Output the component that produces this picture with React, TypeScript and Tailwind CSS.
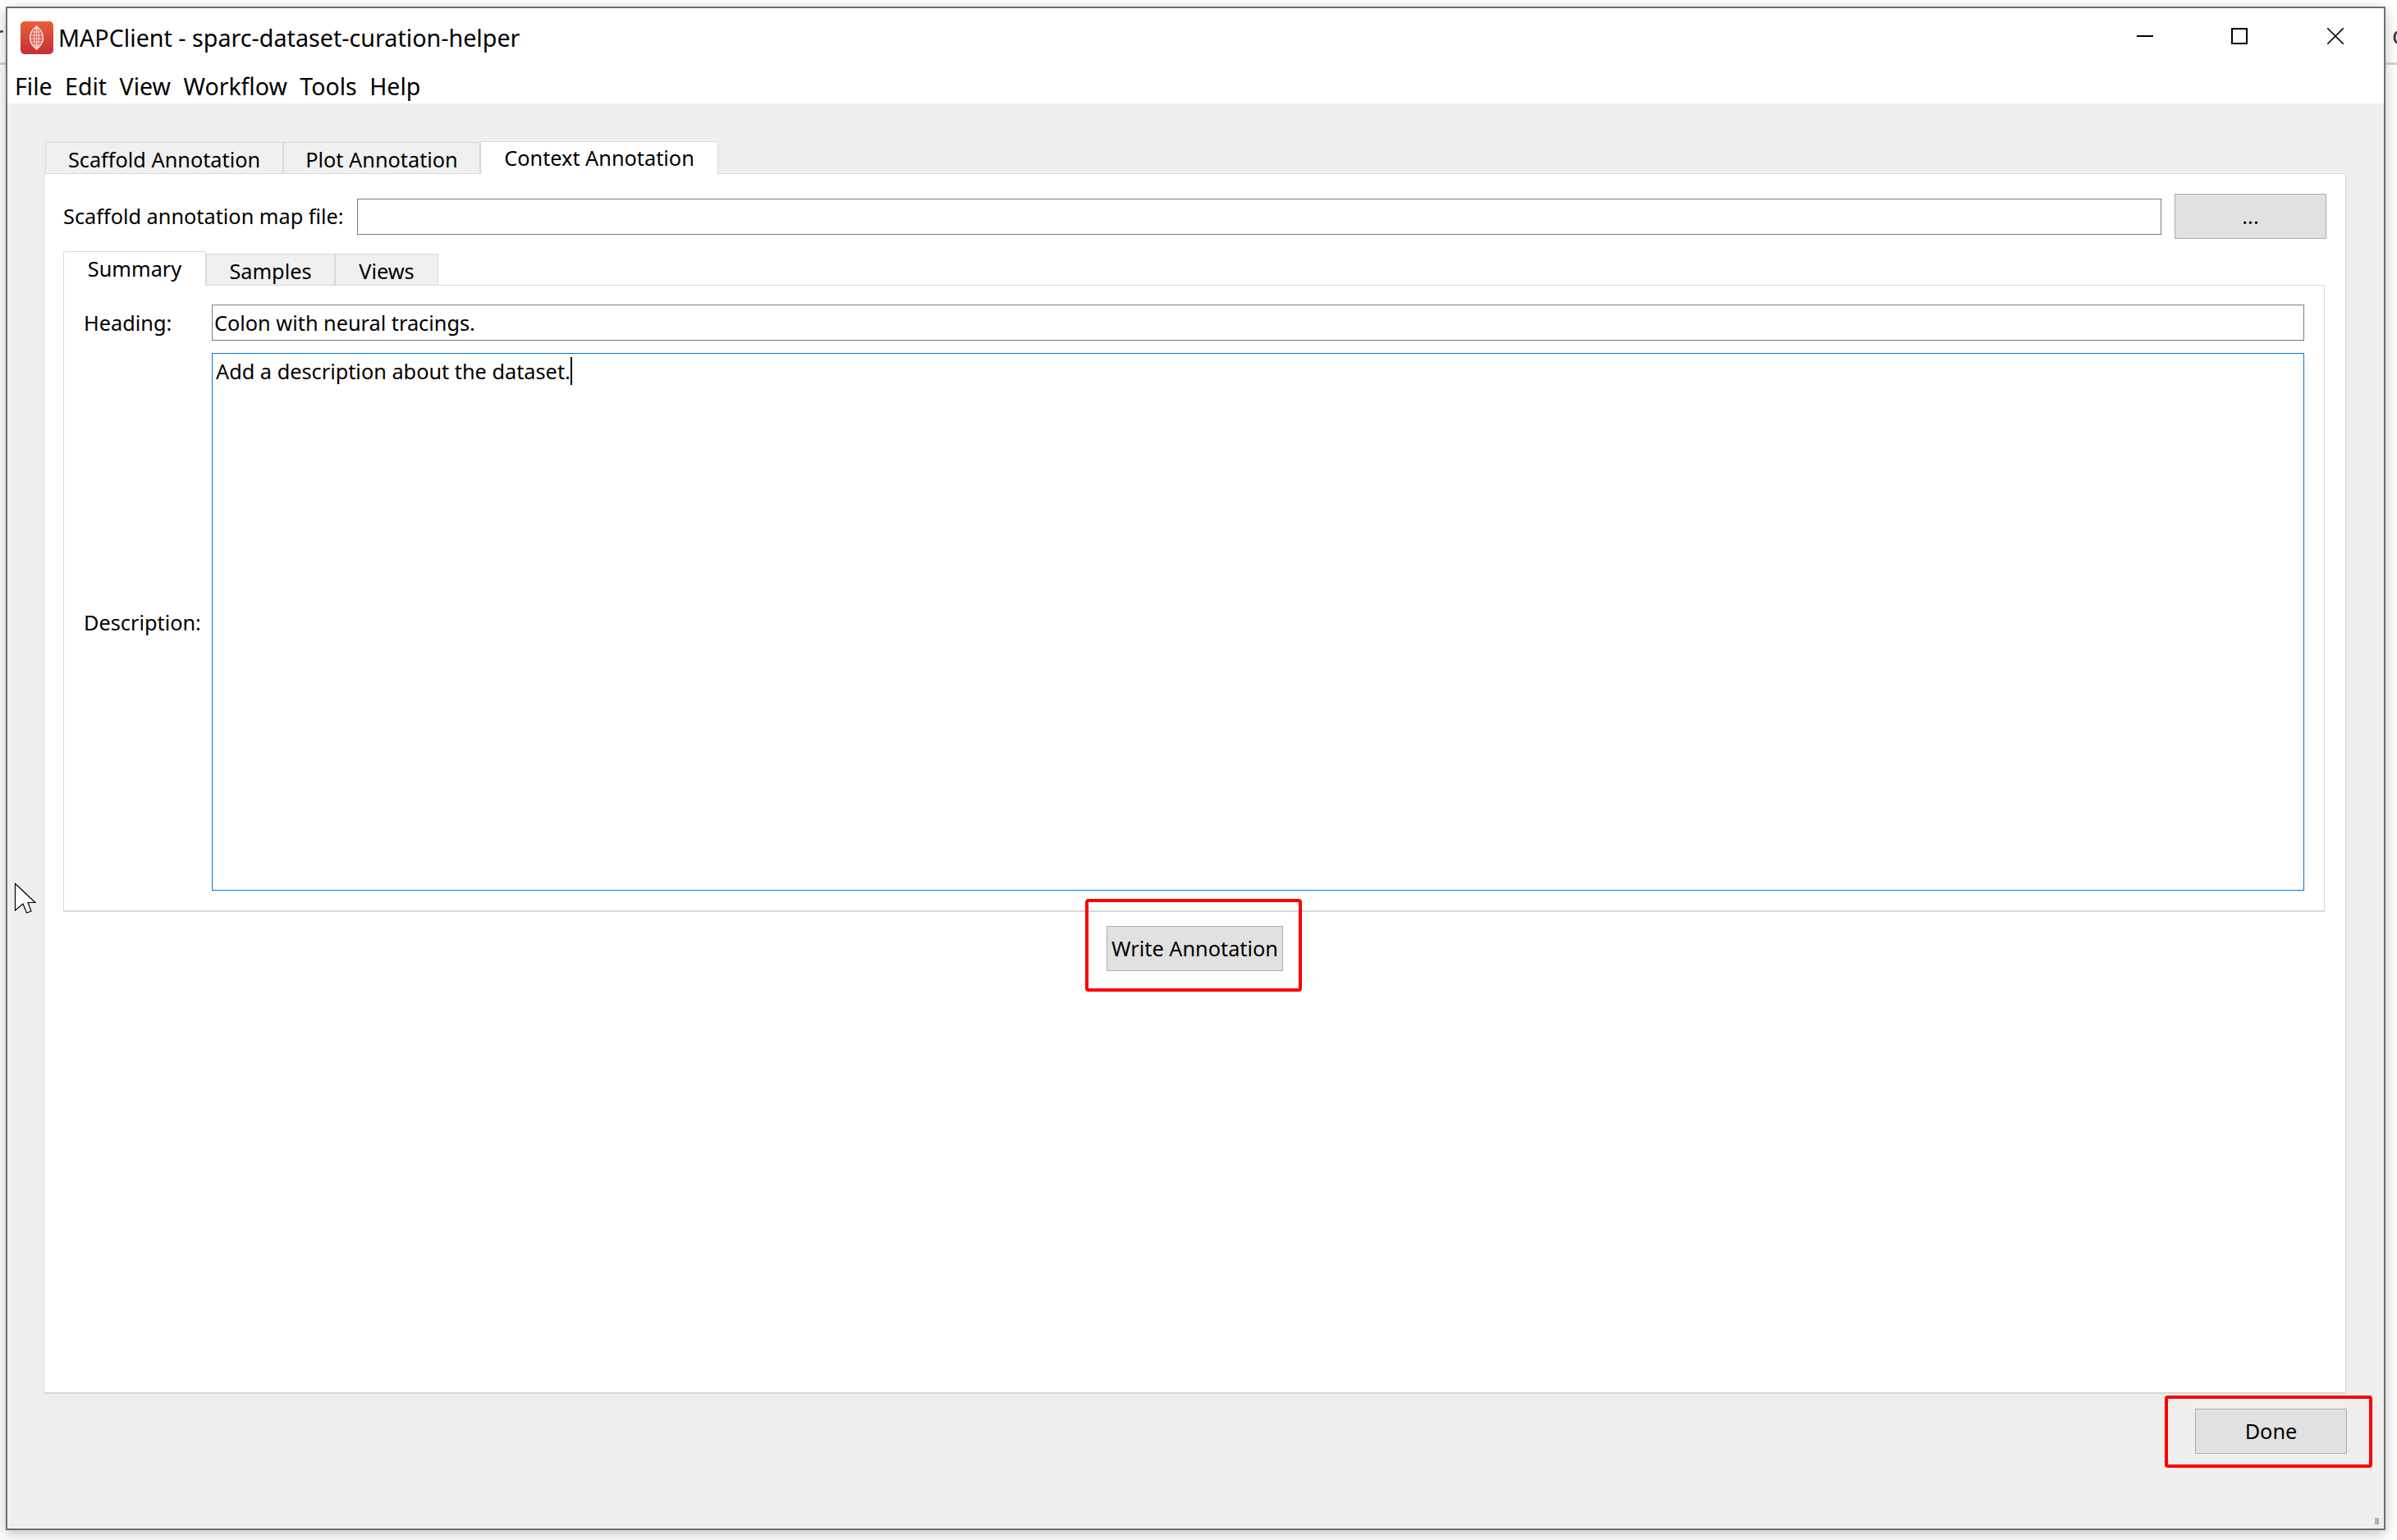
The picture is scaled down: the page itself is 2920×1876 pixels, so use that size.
import React from 'react';

const font = "font-['Noto_Sans','Liberation_Sans',sans-serif]";

const outerTabs = [
  { label: 'Scaffold Annotation', width: 'w-[290px]' },
  { label: 'Plot Annotation', width: 'w-[240px]' },
];

const innerTabs = [
  { label: 'Samples', width: 'w-[157px]' },
  { label: 'Views', width: 'w-[126px]' },
];

const menus = ['File', 'Edit', 'View', 'Workflow', 'Tools', 'Help'];

const AppIcon: React.FC = () => (
  <svg viewBox="0 0 40 40" className="w-[40px] h-[40px] shrink-0">
    <defs>
      <linearGradient id="badge" x1="0" y1="0" x2="0" y2="1">
        <stop offset="0" stopColor="#ea5f3a" />
        <stop offset="1" stopColor="#c42f38" />
      </linearGradient>
    </defs>
    <rect width="40" height="40" rx="5" fill="url(#badge)" />
    <path d="M19.5 6 C9 14 9 26 19.5 34 C30 26 30 14 19.5 6Z" fill="#dd5a52" stroke="#fbe6e0" strokeWidth="1.4" />
    <g fill="none" stroke="#fbe6e0" strokeWidth="0.9">
      <path d="M19.5 6 C15.5 14 15.5 26 19.5 34 C23.5 26 23.5 14 19.5 6Z" />
      <path d="M19.5 6V34M14.5 13H24.5M12.5 17H26.5M12 21H27M13 25H26M15 29H24" />
    </g>
  </svg>
);

const GreyButton: React.FC<{ label: string; className: string }> = ({ label, className }) => (
  <button className={`h-[55px] bg-[#e1e1e1] border border-[#adadad] text-black text-[25.3px] leading-none ${className}`}>
    {label}
  </button>
);

const App: React.FC = () => {
  return (
    <div className={`relative w-[2920px] h-[1876px] bg-white overflow-hidden text-black text-[25.3px] ${font}`}>
      {/* bits of the desktop behind the window */}
      <div className="absolute left-0 top-[76px] w-full h-[3px] bg-[#d6d6d6]" />
      <span className="absolute left-[-8px] top-[20px] text-[#444] text-[30px]">r</span>
      <span className="absolute left-[2914px] top-[20px] text-[#333] text-[30px]">c</span>

      <div className="relative ml-[7px] mt-[8px] w-[2899px] h-[1856px] flex flex-col bg-white border-2 border-[#6f6f6f] shadow-[0_4px_14px_rgba(0,0,0,0.25)]">
        <div className="h-[72px] flex items-center pl-[16px] shrink-0">
          <AppIcon />
          <span className="ml-[6px] text-[28.7px]">MAPClient - sparc-dataset-curation-helper</span>
          <div className="ml-auto self-start pt-[24px] pr-[49px] flex gap-[95px]">
            <svg viewBox="0 0 20 20" className="w-[20px] h-[20px]">
              <path d="M0 10H20" stroke="#000" strokeWidth="2" />
            </svg>
            <svg viewBox="0 0 20 20" className="w-[20px] h-[20px]">
              <rect x="1" y="1" width="18" height="18" fill="none" stroke="#000" strokeWidth="2" />
            </svg>
            <svg viewBox="0 0 20 20" className="w-[20px] h-[20px] ml-[2px]">
              <path d="M0 0L20 20M20 0L0 20" stroke="#111" strokeWidth="1.6" />
            </svg>
          </div>
        </div>

        <div className="h-[44px] flex items-center pl-[9px] pt-[2px] gap-[15.5px] shrink-0 text-[28.5px]">
          {menus.map(m => (
            <span key={m}>{m}</span>
          ))}
        </div>

        <div className="flex-1 flex flex-col bg-[#efefef] pt-[46px] pl-[44px] pr-[45px]">
          <div className="flex items-end h-[39px] ml-[2px]">
            {outerTabs.map(t => (
              <div key={t.label} className={`${t.width} h-[38px] pt-[5px] flex items-center justify-center bg-[#f0f0f0] border border-b-0 border-[#d9d9d9]`}>
                {t.label}
              </div>
            ))}
            <div className="w-[290px] h-[40px] pt-[1px] flex items-center justify-center bg-white border border-b-0 border-[#d9d9d9] z-10 mb-[-1px]">
              Context Annotation
            </div>
          </div>

          <div className="w-[2805px] h-[1487px] flex flex-col bg-white border border-b-2 border-[#d9d9d9] pt-[24px] px-[23px]">
            <div className="flex items-center h-[55px]">
              <span className="w-[358px] shrink-0">Scaffold annotation map file:</span>
              <div className="flex-1 h-[44px] bg-white border border-[#7a7a7a]" />
              <GreyButton label="..." className="w-[185px] ml-[16px]" />
            </div>

            <div className="flex items-end h-[40px] mt-[16px]">
              <div className="w-[174px] h-[42px] pt-[1px] flex items-center justify-center bg-white border border-b-0 border-[#d9d9d9] z-10 mb-[-1px]">
                Summary
              </div>
              {innerTabs.map(t => (
                <div key={t.label} className={`${t.width} h-[38px] pt-[5px] flex items-center justify-center bg-[#f0f0f0] border border-b-0 border-[#d9d9d9]`}>
                  {t.label}
                </div>
              ))}
            </div>

            <div className="w-[2755px] h-[764px] flex flex-col border border-b-2 border-[#d9d9d9] pt-[23px] pl-[24px] pr-[24px]">
              <div className="flex items-center h-[44px]">
                <span className="w-[156px] shrink-0 pt-[2px]">Heading:</span>
                <div className="flex-1 h-full flex items-center pl-[2px] pt-[2px] border border-[#7a7a7a]">
                  Colon with neural tracings.
                </div>
              </div>
              <div className="flex items-center h-[655px] mt-[15px]">
                <span className="w-[156px] shrink-0 pt-[2px]">Description:</span>
                <div className="flex-1 h-full border border-[#0078d7] pl-[4px] pt-[3px]">
                  <span className="border-r-2 border-black">Add a description about the dataset.</span>
                </div>
              </div>
            </div>

            <GreyButton label="Write Annotation" className="w-[215px] mt-[17px] self-center" />
          </div>

          <div className="flex justify-end mt-[18px]">
            <GreyButton label="Done" className="w-[185px]" />
          </div>
        </div>

        <div className="absolute right-[6px] bottom-[5px] w-[5px] h-[8px] bg-[#b0b0b0]" />
      </div>

      {/* annotation boxes drawn over the screenshot */}
      <div className="absolute left-[1322px] top-[1095px] w-[264px] h-[113px] border-[4px] border-[#ff0000] rounded-[4px]" />
      <div className="absolute left-[2637px] top-[1700px] w-[253px] h-[88px] border-[4px] border-[#ff0000] rounded-[4px]" />

      <svg className="absolute left-[17px] top-[1075px] w-[28px] h-[40px]" viewBox="0 0 28 40">
        <path d="M1.5 1.5 V34 L11 26 L15.5 37 L21 35 L17 24.5 H26 Z" fill="#fff" stroke="#000" strokeWidth="1.2" />
      </svg>
    </div>
  );
};

export default App;
